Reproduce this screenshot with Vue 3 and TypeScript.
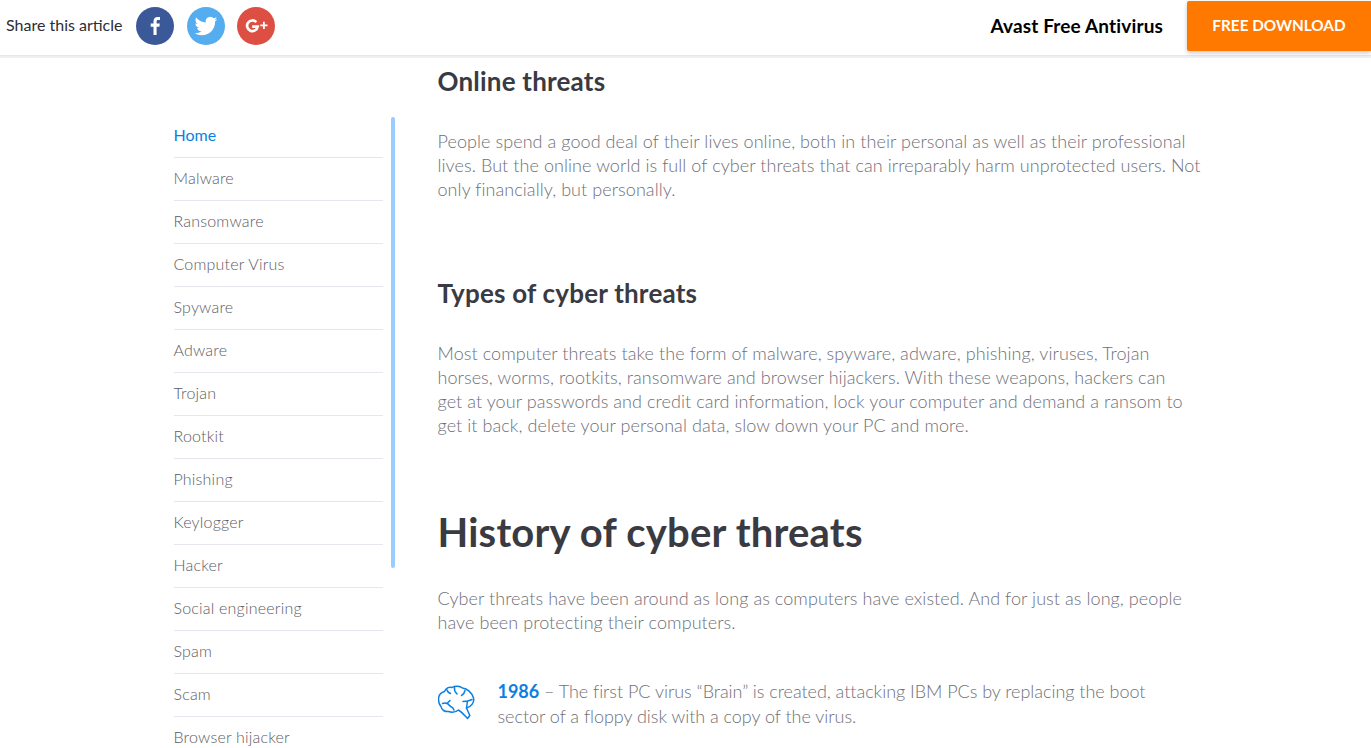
<script setup lang="ts">
const items: string[] = ['Home','Malware','Ransomware','Computer Virus','Spyware','Adware','Trojan','Rootkit','Phishing','Keylogger','Hacker','Social engineering','Spam','Scam','Browser hijacker']
</script>

<template>
  <div class="page">
    <header class="bar">
      <div class="share">
        <span class="share-label">Share this article</span>
        <a class="soc fb"><svg viewBox="0 0 38 38" width="38" height="38"><path fill="#fff" d="M20.6 28v-8.2h2.8l.4-3.2h-3.2v-2c0-.9.3-1.6 1.6-1.6H24V10.100c-.3 0-1.300-.1-2.400-.1-2.400 0-4.100 1.500-4.100 4.200v2.400h-2.800v3.200h2.800V28z"/></svg></a>
        <a class="soc tw"><svg viewBox="0 0 24 24" width="38" height="38"><g transform="translate(4.800 4.800) scale(.6)"><path fill="#fff" d="M23.950 4.570a10 10 0 0 1-2.820.77 4.960 4.960 0 0 0 2.160-2.720c-.95.550-2 .96-3.130 1.190a4.920 4.920 0 0 0-8.380 4.480C7.690 8.090 4.070 6.130 1.640 3.160a4.820 4.820 0 0 0-.67 2.480c0 1.710.87 3.210 2.190 4.100a4.900 4.900 0 0 1-2.230-.62v.06a4.920 4.920 0 0 0 3.950 4.830c-.72.190-1.490.22-2.220.08a4.940 4.940 0 0 0 4.600 3.420A9.870 9.870 0 0 1 0 19.540a14 14 0 0 0 7.560 2.210c9.050 0 14-7.500 14-13.980 0-.21 0-.42-.02-.63a9.940 9.940 0 0 0 2.460-2.550z"/></g></svg></a>
        <a class="soc gp"><svg viewBox="0 0 38 38" width="38" height="38"><path fill="none" stroke="#fff" stroke-width="2.700" d="M19.300 15.200a5.300 5.300 0 1 0 1.300 4.500h-5.400"/><path fill="#fff" d="M26 14.800h1.800v2.700h2.700v1.800h-2.700V22H26v-2.700h-2.700v-1.800H26z"/></svg></a>
      </div>
      <div class="promo">
        <span class="promo-name">Avast Free Antivirus</span>
        <a class="cta">FREE DOWNLOAD</a>
      </div>
    </header>

    <div class="body">
      <nav class="side">
        <ul class="menu">
          <li v-for="(it, i) in items" :key="it" class="item" :class="{ active: i === 0 }">{{ it }}</li>
        </ul>
        <div class="thumb"></div>
      </nav>

      <main class="content">
        <h3 class="h3 first">Online threats</h3>
        <p class="para wide">People spend a good deal of their lives online, both in their personal as well as their professional lives. But the online world is full of cyber threats that can irreparably harm unprotected users. Not only financially, but personally.</p>
        <h3 class="h3 second">Types of cyber threats</h3>
        <p class="para">Most computer threats take the form of malware, spyware, adware, phishing, viruses, Trojan horses, worms, rootkits, ransomware and browser hijackers. With these weapons, hackers can get at your passwords and credit card information, lock your computer and demand a ransom to get it back, delete your personal data, slow down your PC and more.</p>
        <h1 class="h1">History of cyber threats</h1>
        <p class="para">Cyber threats have been around as long as computers have existed. And for just as long, people have been protecting their computers.</p>
        <div class="event">
          <svg class="brain" viewBox="4 4 38 36" width="38" height="36" fill="none" stroke="#0b7fe3" stroke-width="1.500" stroke-linecap="round" stroke-linejoin="round">
            <path d="M4.500 18.500C4.500 14.500 6.500 11.500 10.500 10.500C12 7.500 15 5.500 18 6.500C21 4.500 26 4.800 28.500 7C33 7.500 38 11.500 39.500 17C40.500 21.500 37.500 25.500 32.500 27L35.800 34.500L33.500 37.500C31 35 28.500 31.500 24.500 29C21.500 31.500 17 31.500 14.500 30.500C11 31 7.500 29 7 25.500C5.300 23.500 4.500 21 4.500 18.500z"/>
            <path d="M20.500 6.500C20 9 21 11 23 13M13 9C13.500 11 15 12 16.500 12.500M8.500 22.500C11 21.500 14 22 16 25M13.500 22L16 19.500M20 29C19.500 27.500 18 26 16 25M29 20.500C32 20.500 35 20 38 18.500M33.500 20L32.500 27M31 9.500C30.500 12 29.500 13.500 27.500 14.500"/>
          </svg>
          <p class="event-text"><b class="year">1986</b> – The first PC virus “Brain” is created, attacking IBM PCs by replacing the boot sector of a floppy disk with a copy of the virus.</p>
        </div>
      </main>
    </div>
  </div>
</template>

<style>
html, body { margin: 0; height: 748px; overflow: hidden; background: #fff; }
</style>

<style scoped>
.page { height: 748px; overflow: hidden; font-family: "Lato", "Open Sans", sans-serif; color: #3a3a42; }
.bar { height: 55px; display: flex; justify-content: space-between; background: #fff; box-shadow: 0 1px 0 #e6e6ee, 0 3px 0 #eeeef3; position: relative; z-index: 2; }
.share { display: flex; align-items: center; height: 51px; padding-left: 6px; }
.share-label { font-size: 16px; color: #2d2d35; width: 130px; margin-top: -2px; }
.soc { width: 38px; height: 38px; border-radius: 50%; margin-right: 12.500px; display: block; }
.soc svg { display: block; }
.fb { background: #3b5998; }
.tw { background: #55acee; }
.gp { background: #dd4f43; }
.promo { display: flex; height: 51px; align-items: center; }
.promo-name { font-size: 19px; font-weight: 700; color: #000; margin-right: 24px; letter-spacing: .15px; margin-top: -1px; }
.cta { width: 184px; height: 50px; margin-top: 1px; padding-bottom: 3px; box-sizing: border-box; background: #ff7800; color: #fff; font-weight: 700; font-size: 15.300px; display: flex; align-items: center; justify-content: center; border-radius: 2px 0 0 2px; box-shadow: 0 2px 4px rgba(0,0,0,.22); }
.body { display: flex; padding-left: 173.500px; }
.side { width: 264px; flex: none; display: flex; padding-top: 60px; align-items: flex-start; }
.menu { list-style: none; margin: 0; padding: 0; width: 209.500px; flex: none; }
.item { height: 42px; line-height: 40px; font-size: 16px; letter-spacing: .2px; font-weight: 300; color: #5c5c64; border-bottom: 1px solid #e6e6ee; }
.item.active { color: #0b7fe3; font-weight: 400; letter-spacing: 0; }
.thumb { width: 4px; height: 451px; margin: 2px 0 0 7.500px; background: #99ccff; border-radius: 2px; }
.content { width: 752px; flex: none; }
.h3 { font-size: 26px; line-height: 30px; font-weight: 700; margin: 0; letter-spacing: .2px; color: #3a3a42; }
.first { margin-top: 11px; margin-bottom: 33px; }
.second { margin-top: 77px; margin-bottom: 33px; }
.para { margin: 0; font-size: 18px; line-height: 24px; font-weight: 300; letter-spacing: .07px; color: #6f6f78; }
.para.wide { width: 770px; }
.h1 { font-size: 40px; line-height: 48px; font-weight: 700; letter-spacing: .2px; margin: 71px 0 30px; color: #3a3a42; }
.event { display: flex; margin-top: 45px; }
.brain { flex: none; margin: 6px 22px 0 0; }
.event-text { margin: 0; font-size: 18px; line-height: 25px; font-weight: 300; letter-spacing: -.03px; color: #6f6f78; }
.year { color: #0b7fe3; font-weight: 700; }
</style>
